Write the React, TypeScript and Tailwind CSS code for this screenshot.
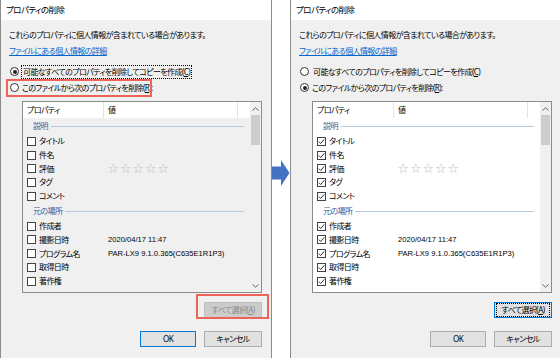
import React from 'react';

type Item = { name: string; value?: string; stars?: boolean };
type Group = { title: string; items: Item[] };

const GROUPS: Group[] = [
  {
    title: '説明',
    items: [{ name: 'タイトル' }, { name: '件名' }, { name: '評価', stars: true }, { name: 'タグ' }, { name: 'コメント' }],
  },
  {
    title: '元の場所',
    items: [
      { name: '作成者' },
      { name: '撮影日時', value: '2020/04/17 11:47' },
      { name: 'プログラム名', value: 'PAR-LX9 9.1.0.365(C635E1R1P3)' },
      { name: '取得日時' },
      { name: '著作権' },
    ],
  },
  { title: 'イメージ', items: [] },
];

const Radio = ({ on }: { on: boolean }) => (
  <span className="w-[9px] h-[9px] rounded-full border border-[#333] bg-white flex items-center justify-center shrink-0">
    {on && <span className="w-[4px] h-[4px] rounded-full bg-[#222]" />}
  </span>
);

const Check = ({ on }: { on: boolean }) => (
  <span className="w-[9px] h-[9px] border border-[#444] bg-white flex items-center justify-center shrink-0">
    {on && (
      <svg width="7" height="7" viewBox="0 0 7 7">
        <path d="M0.8 3.6 L2.7 5.5 L6.3 1.3" fill="none" stroke="#333" strokeWidth="1" />
      </svg>
    )}
  </span>
);

const Chevron = ({ up }: { up: boolean }) => (
  <svg width="7" height="4" viewBox="0 0 7 4">
    <path d={up ? 'M0.5 3.5 L3.5 0.8 L6.5 3.5' : 'M0.5 0.5 L3.5 3.2 L6.5 0.5'} fill="none" stroke="#606060" strokeWidth="1" />
  </svg>
);

const Button = ({ label, kind, width }: { label: React.ReactNode; kind: 'normal' | 'default' | 'focus' | 'disabled'; width: string }) => {
  const base = 'h-[16px] flex items-center justify-center text-[8px] border';
  const styles = {
    normal: 'bg-[#e1e1e1] border-[#adadad] text-black',
    default: 'bg-[#e1e1e1] border-[#0078d7] text-black',
    focus: 'bg-[#e1e1e1] border-[#0078d7] text-black',
    disabled: 'bg-[#cccccc] border-[#bfbfbf] text-[#8a8a8a]',
  }[kind];
  return (
    <div className={`${base} ${styles} ${width}`}>
      {kind === 'focus' ? (
        <span className="flex items-center justify-center w-full h-full border border-dotted border-black m-[1px]">{label}</span>
      ) : (
        label
      )}
    </div>
  );
};

const Dialog = ({ after }: { after: boolean }) => (
  <div className="w-[272px] h-[358px] shrink-0 flex flex-col border-x border-[#8c8c8c] bg-[#f0f0f0] text-black">
    {/* Title bar */}
    <div className="h-[20px] bg-white flex items-center pl-[5px] text-[8.5px]">プロパティの削除</div>

    <div className="flex flex-col pl-[8px] pr-[9px] pt-[8px] text-[8px]">
      <div className="h-[13px] leading-[13px]">これらのプロパティに個人情報が含まれている場合があります。</div>
      <div className="h-[13px] leading-[13px] mt-[3px] text-[#0066cc] underline">ファイルにある個人情報の詳細</div>

      <div className="h-[13px] mt-[8px] flex items-center gap-[2px] ml-[1px]">
        <Radio on={!after} />
        <span className={`px-[1px] leading-[12px] border border-dotted ${after ? 'border-transparent' : 'border-black'}`}>
          可能なすべてのプロパティを削除してコピーを作成(<span className="underline">C</span>)
        </span>
      </div>

      <div className="relative h-[13px] mt-[3px] flex items-center gap-[3px] ml-[1px]">
        <Radio on={after} />
        <span>
          このファイルから次のプロパティを削除(<span className="underline">R</span>):
        </span>
        {!after && <div className="absolute left-[-4px] top-[-2px] w-[146px] h-[18px] border-2 border-[#ef6459]" />}
      </div>

      {/* Property list */}
      <div className={`mt-[7px] ml-[13px] h-[192px] border border-[#8c8c8c] flex overflow-hidden ${after ? 'bg-white' : 'bg-[#f0f0f0]'}`}>
        <div className="flex-1 flex flex-col">
          <div className="h-[16px] shrink-0 bg-white flex">
            <div className="w-[81px] pl-[4px] flex items-center border-r border-[#e5e5e5]">プロパティ</div>
            <div className="w-[134px] pl-[4px] flex items-center border-r border-[#e5e5e5]">値</div>
            <div className="flex-1" />
          </div>
          {GROUPS.map((g) => (
            <div key={g.title} className="flex flex-col shrink-0">
              <div className="h-[16.5px] shrink-0 flex items-start pt-[2px] pl-[10px] pr-[6px] gap-[3px] text-[#3d5a99]">
                <span className="leading-[12px]">{g.title}</span>
                <span className="flex-1 h-px bg-[#b8c7e2] mt-[6px]" />
              </div>
              {g.items.map((it) => (
                <div key={it.name} className="h-[13.7px] shrink-0 flex items-center">
                  <div className="w-[85px] pl-[4px] flex items-center gap-[3px]">
                    <Check on={after} />
                    <span>{it.name}</span>
                  </div>
                  {it.value && (
                    <span className="text-[7.6px] tracking-normal font-['Liberation_Sans',sans-serif] [font-feature-settings:normal]">
                      {it.value}
                    </span>
                  )}
                  {it.stars && (
                    <span className="flex gap-[2px] text-[#c4c4c4] text-[10.5px] leading-none tracking-normal">
                      {['a', 'b', 'c', 'd', 'e'].map((k) => (
                        <span key={k}>☆</span>
                      ))}
                    </span>
                  )}
                </div>
              ))}
            </div>
          ))}
        </div>
        {/* Scrollbar */}
        <div className="w-[11px] shrink-0 bg-[#f0f0f0] flex flex-col items-center">
          <div className="h-[13px] flex items-center">
            <Chevron up />
          </div>
          <div className="w-[9px] h-[30px] bg-[#cdcdcd]" />
          <div className="flex-1" />
          <div className="h-[13px] flex items-center">
            <Chevron up={false} />
          </div>
        </div>
      </div>

      <div className="relative mt-[9px] self-end">
        <Button kind={after ? 'focus' : 'disabled'} width="w-[58px]" label={<>すべて選択(<span className="underline">A</span>)</>} />
        {!after && <div className="absolute left-[-8px] top-[-8px] w-[73px] h-[25px] border-2 border-[#ef6459]" />}
      </div>

      <div className="mt-[13px] flex justify-end gap-[8px]">
        <Button kind={after ? 'normal' : 'default'} width="w-[56px]" label="OK" />
        <Button kind="normal" width="w-[58px]" label="キャンセル" />
      </div>
    </div>
  </div>
);

export default function App() {
  return (
    <div className="w-[560px] h-[358px] overflow-hidden bg-white flex tracking-[-0.6px] font-['Noto_Sans','Noto_Sans_CJK_JP',sans-serif] [font-feature-settings:'palt']">
      <Dialog after={false} />
      <div className="w-[18px] shrink-0 pt-[160px]">
        <svg width="18" height="26" viewBox="0 0 18 26">
          <path d="M0 6.5 H9 V0 L17.5 13 L9 26 V19.5 H0 Z" fill="#4472c4" />
        </svg>
      </div>
      <Dialog after />
    </div>
  );
}
